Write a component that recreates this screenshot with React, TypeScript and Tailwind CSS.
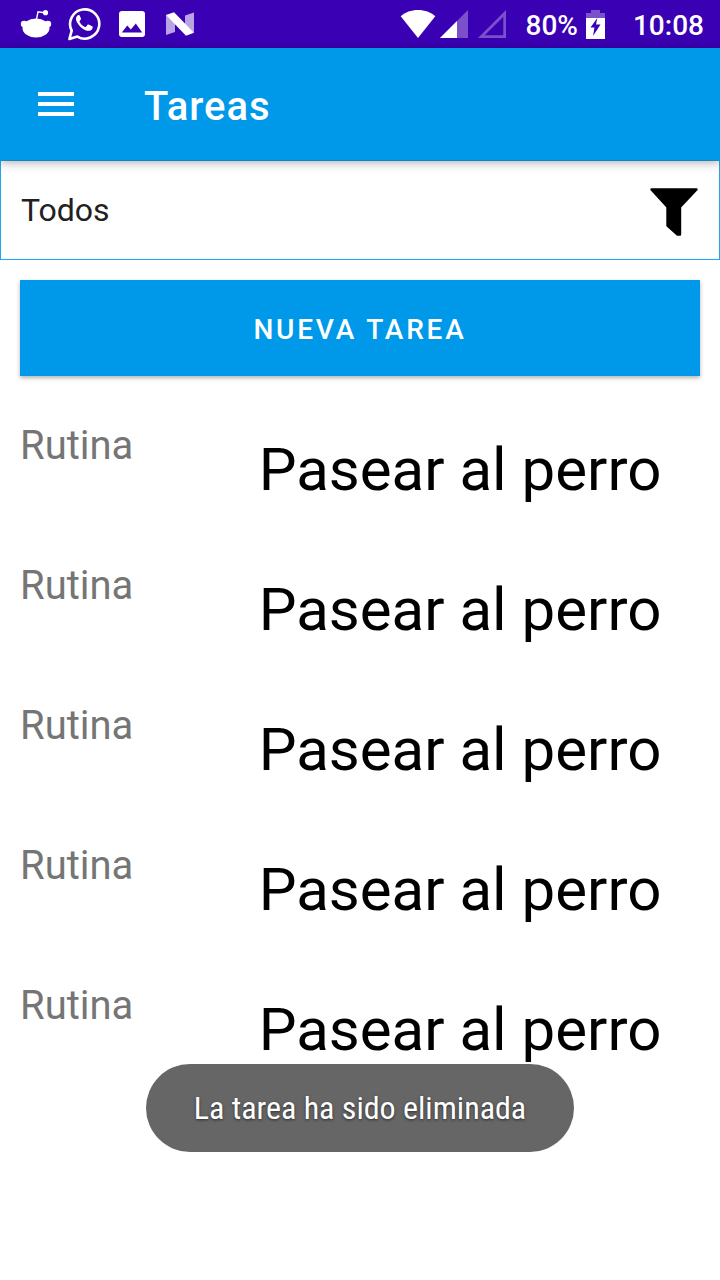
import React from "react";

const tasks = [
  { id: 1, category: "Rutina", name: "Pasear al perro" },
  { id: 2, category: "Rutina", name: "Pasear al perro" },
  { id: 3, category: "Rutina", name: "Pasear al perro" },
  { id: 4, category: "Rutina", name: "Pasear al perro" },
  { id: 5, category: "Rutina", name: "Pasear al perro" },
];

function RedditIcon() {
  return (
    <svg viewBox="0 0 32 32" className="size-8" aria-hidden="true">
      <g fill="#fff">
        <ellipse cx="16" cy="20" rx="13.5" ry="9.5" />
        <circle cx="4" cy="16" r="3.2" />
        <circle cx="28" cy="16" r="3.2" />
        <circle cx="25.5" cy="4.7" r="2.6" />
      </g>
      <path d="M16.5 11.5L18 3.7L24.5 4.8" fill="none" stroke="#fff" strokeWidth="1.4" />
    </svg>
  );
}

function WhatsAppIcon() {
  return (
    <svg viewBox="0 0 34 36" className="h-9 w-8.5" aria-hidden="true">
      <path
        d="M1.4 33L3.7 24.7A14.6 14.6 0 1 1 9.3 30.6Z"
        fill="none"
        stroke="#fff"
        strokeWidth="2.6"
        strokeLinejoin="round"
      />
      <path
        d="M11.5 9.2C10.8 8.8 9.8 9 9.2 9.7C7.7 11.3 7.6 13.5 8.7 15.7C10.6 19.5 14 22.9 17.9 24.4C20.6 25.4 23.8 24.7 24.5 22.2C24.8 21.2 24.8 20.6 24.2 20.3L20.6 18.6C20.1 18.4 19.7 18.5 19.4 18.9L18 20.7C17.7 21 17.4 21.1 17 20.9C14.6 19.8 12.8 18.2 11.6 15.9C11.4 15.5 11.4 15.2 11.7 14.9L12.9 13.3C13.1 13 13.1 12.7 13 12.4Z"
        fill="#fff"
      />
    </svg>
  );
}

function PictureIcon() {
  return (
    <svg viewBox="0 0 26 26" className="size-6.5" aria-hidden="true">
      <rect width="26" height="26" rx="3" fill="#fff" />
      <path d="M2.8 21.4L8.3 14.6L11.8 18.6L16.8 12.6L23.2 21.4Z" fill="#3a00b3" />
    </svg>
  );
}

function NougatIcon() {
  return (
    <svg viewBox="0 0 28 24" className="h-6 w-7" aria-hidden="true">
      <path d="M0 2.5L9 11V20L0 23Z" fill="#b9a3e4" />
      <path d="M28 0.5V21L19 13V3.5Z" fill="#b9a3e4" />
      <path d="M0 3L8 0.2L28 20.7L20 23.7Z" fill="#fff" />
    </svg>
  );
}

function WifiIcon() {
  return (
    <svg viewBox="0 0 36 28" className="h-7 w-9" aria-hidden="true">
      <path d="M0.7 6.3C5.5 2.2 11 0 18 0S30.5 2.2 35.3 6.3L18 28Z" fill="#fff" />
    </svg>
  );
}

function SignalIcon() {
  return (
    <svg viewBox="0 0 28 28" className="size-7" aria-hidden="true">
      <path d="M28 0V28H0Z" fill="#7a51cb" />
      <path d="M17 11V28H0Z" fill="#fff" />
    </svg>
  );
}

function NoSignalIcon() {
  return (
    <svg viewBox="0 0 28 28" className="size-7" aria-hidden="true">
      <path d="M28 0V28H0ZM25.3 6.7L6.7 25.3H25.3Z" fill="#7a51cb" fillRule="evenodd" />
    </svg>
  );
}

function BatteryIcon() {
  return (
    <svg viewBox="0 0 19 29" className="h-7.25 w-4.75" aria-hidden="true">
      <path d="M5 0H14V3H19V9H0V3H5Z" fill="#7a51cb" />
      <path d="M0 8H19V29H0Z" fill="#fff" />
      <path d="M11.3 8L4.5 17.5H8.5L7 26L14.5 14.5H10Z" fill="#3a00b3" />
    </svg>
  );
}

function StatusBar() {
  return (
    <div className="flex h-12 items-center justify-between bg-[#3a00b3] pl-5 pr-4 text-[28px] font-medium leading-8 text-white">
      <div className="flex items-center">
        <RedditIcon />
        <span className="ml-4 flex">
          <WhatsAppIcon />
        </span>
        <span className="ml-4.25 flex">
          <PictureIcon />
        </span>
        <span className="ml-5.25 flex">
          <NougatIcon />
        </span>
      </div>
      <div className="flex items-center">
        <WifiIcon />
        <span className="ml-1 flex">
          <SignalIcon />
        </span>
        <span className="ml-2.5 flex">
          <NoSignalIcon />
        </span>
        <span className="ml-5 pt-0.75">80%</span>
        <span className="ml-2 flex">
          <BatteryIcon />
        </span>
        <span className="ml-7 pt-0.75">10:08</span>
      </div>
    </div>
  );
}

function FilterBar() {
  return (
    <div className="flex h-25 items-center border border-[#1ea7f2] pr-5">
      <select
        aria-label="Filtro"
        defaultValue="todos"
        className="h-full min-w-0 flex-1 appearance-none bg-transparent pl-5 text-[32px] leading-10 text-[#212121] outline-none"
      >
        <option value="todos">Todos</option>
      </select>
      <button type="button" aria-label="Filtrar" className="flex pt-1">
        <svg viewBox="0 0 50 50" className="size-12.5" aria-hidden="true">
          <path
            d="M2.5 2.5H47.5L31 20V47.5H28.5L18.5 38.5V20Z"
            fill="#000"
            stroke="#000"
            strokeWidth="2.4"
            strokeLinejoin="round"
          />
        </svg>
      </button>
    </div>
  );
}

export default function App() {
  return (
    <div className="min-h-screen bg-white font-['Roboto',sans-serif]">
      <StatusBar />
      <header className="relative flex h-28 items-center bg-[#0099e9] pl-9.5 text-white shadow-[0_2px_10px_rgba(0,0,0,0.35)]">
        <button type="button" aria-label="Abrir menú" className="flex">
          <svg viewBox="0 0 36 24" className="h-6 w-9" aria-hidden="true">
            <path d="M0 0H36V4H0ZM0 10H36V14H0ZM0 20H36V24H0Z" fill="#fff" />
          </svg>
        </button>
        <h1 className="ml-17.5 pt-1.5 text-[40px] font-medium leading-12 tracking-wide">Tareas</h1>
      </header>
      <main>
        <FilterBar />
        <div className="p-5">
          <button
            type="button"
            className="h-24 w-full bg-[#0099e9] pt-1 text-[28px] font-medium uppercase tracking-widest text-white shadow-[0_2px_4px_rgba(0,0,0,0.3)]"
          >
            Nueva tarea
          </button>
          <ul className="mt-5">
            {tasks.map((task) => (
              <li key={task.id} className="flex h-35 items-start pt-6.5">
                <span className="w-50 text-[40px] leading-12 text-[#757575]">{task.category}</span>
                <span className="flex-1 pt-2 text-center text-[60px] leading-20 text-black">{task.name}</span>
              </li>
            ))}
          </ul>
        </div>
      </main>
      <div role="status" className="fixed inset-x-0 bottom-32 flex justify-center">
        <p className="rounded-full bg-[#666666] px-12 py-6 font-['Roboto_Condensed','Roboto',sans-serif] text-[32px] leading-10 text-white [text-shadow:0_1px_3px_rgba(0,0,0,0.6)]">
          La tarea ha sido eliminada
        </p>
      </div>
    </div>
  );
}
